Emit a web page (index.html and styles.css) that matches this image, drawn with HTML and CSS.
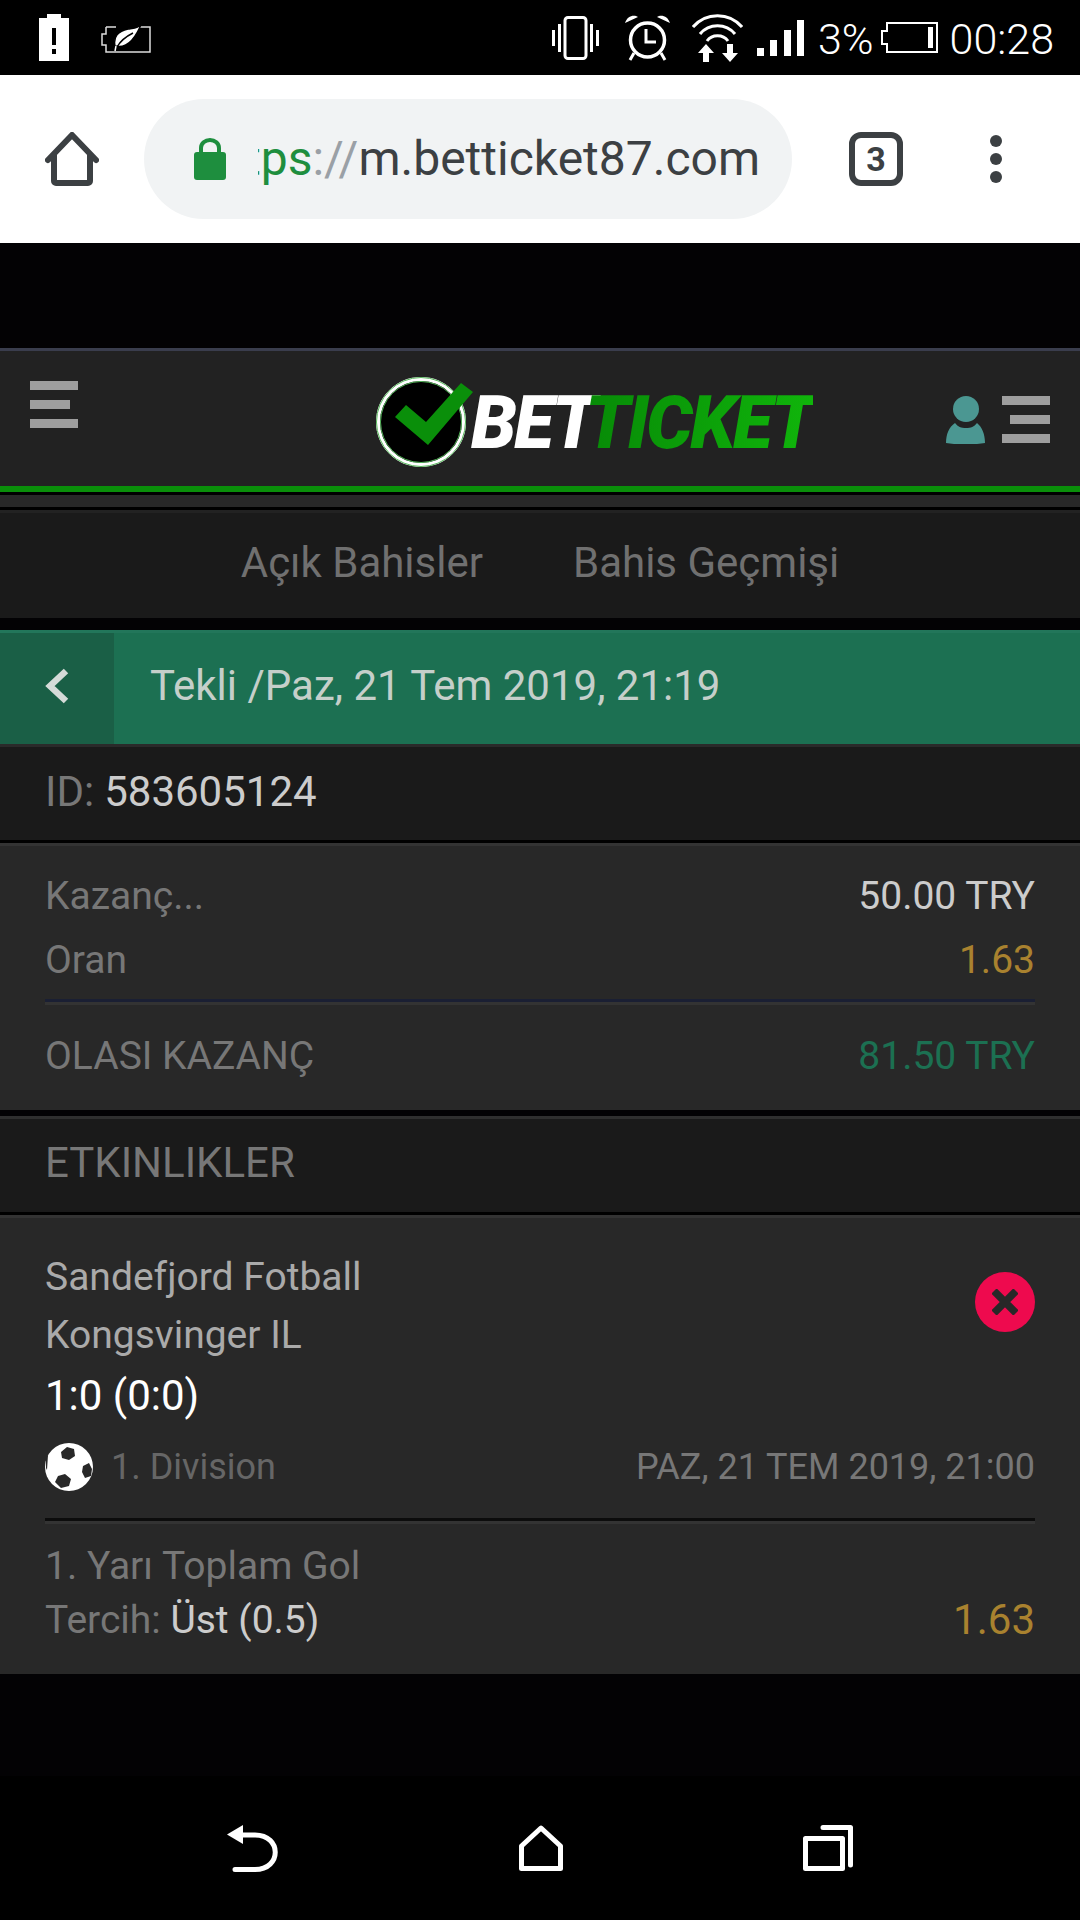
FILE: index.html
```html
<!DOCTYPE html>
<html lang="en">
<head>
    <meta charset="UTF-8">
    <title>BetTicket</title>
    <link rel="stylesheet" href="styles.css">
</head>
<body>
    <!-- Status bar -->
    <div class="status">
        <div class="status-left">
            <svg class="ic-alert" viewBox="0 0 30 47"><path fill="#fff" fill-rule="evenodd" d="M8 0h14v4h8v43H0V4h8zM13 14v17h4V14zM13 35v5h4v-5z"/></svg>
            <svg class="ic-leaf" viewBox="0 0 50 32"><path fill="none" stroke="#ddd" stroke-width="1.5" d="M5 5h10M38 5h11v25H5v-7H1V12h4V5"/><path fill="#fff" stroke="#000" stroke-width="1.5" d="M41 0C39 6 33 6 27 7 17 9 12 15 14 24 26 27 35 16 41 0z"/><path fill="none" stroke="#000" stroke-width="1.5" d="M16 25C20 18 26 14 32 11"/><path fill="none" stroke="#fff" stroke-width="1.5" d="M15 24l-1 5"/></svg>
        </div>
        <div class="status-right">
            <svg class="ic-vibrate" viewBox="0 0 47 44"><rect x="13" y="1.5" width="21" height="41" rx="3" fill="none" stroke="#fff" stroke-width="3"/><path stroke="#fff" stroke-width="3" d="M1.5 14v16M7.500 8v28M39.500 8v28M45.500 14v16"/></svg>
            <svg class="ic-alarm" viewBox="0 0 45 46"><circle cx="22.500" cy="25" r="17" fill="none" stroke="#fff" stroke-width="3.500"/><path fill="#fff" d="M0 8C2 1 9-1 13 2zM45 8C43 1 36-1 32 2z"/><path fill="none" stroke="#fff" stroke-width="3" d="M21 14v13h10M9 38l-4 7M36 38l4 7"/></svg>
            <svg class="ic-wifi" viewBox="0 0 51 49"><g fill="none" stroke="#fff" stroke-width="3"><path d="M1 14C14 -1 37 -1 50 14"/><path d="M8 21C17 10 34 10 43 21"/><path d="M15 28C20 21 31 21 36 28"/></g><path fill="#fff" d="M14 31l8 9h-5v9h-6v-9H6zM38 49l-8-9h5v-9h6v9h5z"/></svg>
            <svg class="ic-signal" viewBox="0 0 47 36"><path fill="#fff" d="M0 28h7v8H0zM13 20h7v16h-7zM27 10h7v26h-7zM40 0h7v36h-7z"/></svg>
            <span class="status-text pct">3%</span>
            <svg class="ic-battery" viewBox="0 0 57 31"><path fill="none" stroke="#fff" stroke-width="2" d="M6 1h50v29H6v-8H1V9h5z"/><path fill="#fff" d="M47 5h5v21h-5z"/></svg>
            <span class="status-text time">00:28</span>
        </div>
    </div>

    <!-- Browser toolbar -->
    <div class="toolbar">
        <svg class="ic-home" viewBox="0 0 54 54"><path fill="none" stroke="#3c4043" stroke-width="6" stroke-linecap="round" stroke-linejoin="round" d="M3 28L27 3l24 25M9 23v26a2 2 0 0 0 2 2h32a2 2 0 0 0 2-2V23"/></svg>
        <div class="pill">
            <svg class="ic-lock" viewBox="0 0 32 42"><path fill="#1e8e3e" d="M3 14h26a3 3 0 0 1 3 3v22a3 3 0 0 1-3 3H3a3 3 0 0 1-3-3V17a3 3 0 0 1 3-3z"/><path fill="none" stroke="#1e8e3e" stroke-width="4" d="M7 16v-6a9 8 0 0 1 18 0v6"/></svg>
            <div class="url"><span><span class="url-green">https</span><span class="url-gray">://</span>m.betticket87.com</span></div>
        </div>
        <div class="tabs-count">3</div>
        <div class="dots"><i></i><i></i><i></i></div>
    </div>

    <div class="top-gap"></div>

    <!-- Site header -->
    <div class="header">
        <div class="burger burger-left"><i></i><i></i><i></i></div>
        <div class="logo">
            <svg class="logo-mark" viewBox="0 0 98 90"><circle cx="45" cy="45" r="43" fill="#000" stroke="#fff" stroke-width="4"/><circle cx="45" cy="45" r="44.500" fill="none" stroke="#55b85a" stroke-width="1"/><circle cx="45" cy="45" r="40.500" fill="none" stroke="#55b85a" stroke-width="1"/><path fill="#0a8f0a" d="M19 40L30 28 50 45 85 6 97 15 52 68z"/></svg>
            <span class="logo-text"><span class="logo-bet">BET</span><span class="logo-ticket">TICKET</span></span>
        </div>
        <div class="header-right">
            <svg class="ic-user" viewBox="0 0 39 48"><ellipse cx="20" cy="13" rx="13" ry="13" fill="#4b9792"/><path fill="#4b9792" d="M9 27c3 4 6 5 11 5s8-1 11-5c5 4 8 11 8 20-12 2-27 2-39 0 0-9 3-16 9-20z"/></svg>
            <div class="burger burger-right"><i></i><i></i><i></i></div>
        </div>
    </div>
    <div class="sep"></div>

    <!-- Tabs -->
    <div class="tabs">
        <a>Açık Bahisler</a>
        <a>Bahis Geçmişi</a>
    </div>

    <!-- Title -->
    <div class="title-bar">
        <div class="back">
            <svg class="ic-chevron" viewBox="0 0 24 36"><path fill="none" stroke="#d5dbd8" stroke-width="6.500" d="M21 3L5 18l16 15"/></svg>
        </div>
        <div class="title-text">Tekli /Paz, 21 Tem 2019, 21:19</div>
    </div>

    <div class="id-row"><span class="muted">ID:</span> <span class="light">583605124</span></div>

    <!-- Summary -->
    <div class="summary">
        <div class="sum-row"><span class="muted">Kazanç...</span><span class="light">50.00 TRY</span></div>
        <div class="sum-row"><span class="muted">Oran</span><span class="gold">1.63</span></div>
        <div class="divider-blue"></div>
        <div class="sum-row sum-total"><span class="muted">OLASI KAZANÇ</span><span class="green">81.50 TRY</span></div>
    </div>

    <div class="events-head">ETKINLIKLER</div>

    <!-- Event -->
    <div class="event">
        <div class="event-top">
            <div>
                <div class="team">Sandefjord Fotball</div>
                <div class="team">Kongsvinger IL</div>
                <div class="score">1:0 (0:0)</div>
            </div>
            <div class="close">
                <svg class="ic-x" viewBox="0 0 26 26"><path stroke="#282828" stroke-width="7.500" d="M2 2l22 22M24 2L2 24"/></svg>
            </div>
        </div>
        <div class="event-meta">
            <div class="league">
                <svg class="ic-ball" viewBox="0 0 48 48"><circle cx="24" cy="24" r="24" fill="#fff"/><path fill="#282828" d="M16 9l6-5 7 2 1 7-6 4-7-2zM38 23l6-3 3 6-1 7-6 2-3-6zM13 33l7-2 6 5-2 7-8 2-6-6zM1 14l2-2-1 15-1-2z"/></svg>
                <span>1. Division</span>
            </div>
            <span class="match-date">PAZ, 21 TEM 2019, 21:00</span>
        </div>
        <div class="divider-dark"></div>
        <div class="market">1. Yarı Toplam Gol</div>
        <div class="pick"><span><span class="muted">Tercih:</span> <span class="light">Üst (0.5)</span></span><span class="gold pick-odd">1.63</span></div>
    </div>

    <!-- Android nav bar -->
    <div class="navbar">
        <svg class="ic-nav-back" viewBox="0 0 51 47"><path fill="none" stroke="#fff" stroke-width="5" stroke-linecap="round" d="M14 10h14c27 0 27 34.500 0 34.500H8"/><path fill="#fff" d="M0 9.500L16 0v19z"/></svg>
        <svg class="ic-nav-home" viewBox="0 0 44 46"><path fill="none" stroke="#fff" stroke-width="5" stroke-linejoin="round" d="M22 3L2.500 21v22.500h39V21z"/></svg>
        <svg class="ic-nav-recent" viewBox="0 0 50 46"><rect x="2.500" y="13.500" width="37" height="30" fill="none" stroke="#fff" stroke-width="5" stroke-linejoin="round"/><path fill="none" stroke="#fff" stroke-width="5" stroke-linecap="round" stroke-linejoin="round" d="M20 2.500h27.500V40"/></svg>
    </div>
</body>
</html>
```

FILE: styles.css
```css
/* General Reset */
* {
    margin: 0;
    padding: 0;
    box-sizing: border-box;
    font-family: Roboto, "Liberation Sans", sans-serif;
}

body {
    width: 1080px;
    height: 1920px;
    background-color: #030204;
    display: flex;
    flex-direction: column;
    font-size: 39px;
    overflow: hidden;
}

svg {
    display: block;
    flex-shrink: 0;
}

/* Status bar */
.status {
    height: 75px;
    background-color: #000;
    display: flex;
    justify-content: space-between;
    align-items: center;
    padding: 0 26px 0 39px;
}

.status-left,
.status-right {
    display: flex;
    align-items: center;
}

.status-left { gap: 32px; }
.status-right { gap: 14px; }

.status-text {
    color: #fff;
    font-size: 43px;
    line-height: 1;
    font-weight: 300;
    padding-top: 4px;
}

.ic-alert { width: 30px; height: 47px; }
.ic-leaf { width: 50px; height: 32px; }
.ic-vibrate { width: 47px; height: 44px; margin-right: 12px; }
.ic-alarm { width: 45px; height: 46px; margin-right: 8px; }
.ic-wifi { width: 51px; height: 49px; }
.ic-signal { width: 47px; height: 36px; }
.ic-battery { width: 57px; height: 31px; margin-right: -2px; }
.pct { margin-right: -7px; }

/* Browser toolbar */
.toolbar {
    height: 168px;
    background-color: #fff;
    display: flex;
    align-items: center;
    padding-left: 45px;
}

.ic-home { width: 54px; height: 54px; }

.pill {
    width: 648px;
    height: 120px;
    margin-left: 45px;
    border-radius: 60px;
    background-color: #f1f3f4;
    display: flex;
    align-items: center;
    padding-left: 50px;
}

.ic-lock { width: 32px; height: 42px; margin-right: 32px; }

.url {
    width: 502px;
    display: flex;
    justify-content: flex-end;
    overflow: hidden;
    white-space: nowrap;
    font-size: 48px;
    line-height: 60px;
    color: #3c4043;
}

.url-green { color: #1e8e3e; }
.url-gray { color: #9aa0a6; }

.tabs-count {
    width: 54px;
    height: 54px;
    margin-left: 57px;
    border: 6px solid #3c4043;
    border-radius: 12px;
    color: #3c4043;
    font-size: 34px;
    font-weight: 700;
    display: flex;
    align-items: center;
    justify-content: center;
}

.dots {
    margin-left: 87px;
    display: flex;
    flex-direction: column;
    gap: 6px;
}

.dots i {
    width: 12px;
    height: 12px;
    border-radius: 50%;
    background-color: #3c4043;
}

.top-gap { height: 105px; }

/* Site header */
.header {
    height: 144px;
    background-color: #222;
    border-top: 3px solid #3a3d4d;
    border-bottom: 6px solid #0a8f0a;
    display: flex;
    align-items: flex-start;
    padding: 0 30px;
}

.burger {
    display: flex;
    flex-direction: column;
    gap: 10px;
}

.burger i {
    height: 9px;
    background-color: #9e9e9e;
}

.burger-left {
    width: 48px;
    margin-top: 30px;
}

.burger-left i:nth-child(2) { width: 40px; }

.burger-right {
    width: 48px;
    align-items: flex-end;
}

.burger-right i { width: 100%; }
.burger-right i:nth-child(2) { width: 40px; }

.logo {
    display: flex;
    align-items: center;
    margin-top: 24px;
    margin-left: 298px;
}

.logo-mark {
    width: 98px;
    height: 90px;
}

.logo-text {
    font-size: 73px;
    line-height: 90px;
    font-weight: 900;
    font-style: italic;
    margin-left: -3px;
    padding-top: 3px;
    letter-spacing: -2.5px;
}

.logo-bet { color: #fff; }

.logo-ticket {
    margin-left: -9px;
    background: linear-gradient(90deg, #078a07, #10b50b);
    -webkit-background-clip: text;
    background-clip: text;
    color: transparent;
}

.header-right {
    display: flex;
    gap: 17px;
    margin-top: 45px;
    margin-left: auto;
}

.ic-user { width: 39px; height: 48px; }

.sep {
    height: 18px;
    background-color: #282828;
    border-top: 3px solid #000;
    border-bottom: 3px solid #000;
}

/* Tabs */
.tabs {
    height: 108px;
    background-color: #1a1a1a;
    border-top: 3px solid #222;
    display: flex;
    justify-content: center;
    align-items: center;
    gap: 90px;
    padding-bottom: 6px;
    font-size: 42px;
    color: #707070;
    margin-bottom: 12px;
}

/* Title */
.title-bar {
    height: 114px;
    background-color: #1c7052;
    border-top: 3px solid #22765a;
    display: flex;
    align-items: center;
}

.back {
    width: 114px;
    height: 100%;
    padding-bottom: 6px;
    background-color: #1a5f46;
    display: flex;
    align-items: center;
    justify-content: center;
}

.ic-chevron { width: 24px; height: 36px; }

.title-text {
    margin-left: 36px;
    padding-bottom: 6px;
    font-size: 42px;
    color: #c5cfca;
}

.id-row {
    height: 99px;
    background-color: #1a1a1a;
    border-top: 3px solid #2a2a2a;
    border-bottom: 3px solid #000;
    padding: 0 0 4px 45px;
    display: flex;
    align-items: center;
    gap: 10px;
    font-size: 42px;
}

.muted { color: #777; }
.light { color: #ccc; }
.gold { color: #a9822f; }
.green { color: #1c7052; }

/* Summary */
.summary {
    height: 267px;
    background-color: #282828;
    border-top: 3px solid #333;
    padding: 18px 45px 0;
}

.sum-row {
    height: 63px;
    display: flex;
    justify-content: space-between;
    align-items: center;
}

.sum-row + .sum-row { padding-top: 2px; }

.divider-blue {
    height: 6px;
    margin-top: 9px;
    background-color: #333;
    border-top: 3px solid #1a1f33;
}

.sum-total {
    height: 84px;
    margin-top: 8px;
    padding-top: 2px;
}

.events-head {
    height: 99px;
    margin-top: 6px;
    background-color: #1a1a1a;
    border-top: 3px solid #2f2f2f;
    border-bottom: 3px solid #000;
    padding: 0 0 6px 45px;
    display: flex;
    align-items: center;
    font-size: 42px;
    color: #777;
}

/* Event */
.event {
    height: 459px;
    background-color: #282828;
    border-top: 3px solid #333;
    padding: 30px 45px 0;
}

.event-top {
    display: flex;
    justify-content: space-between;
    align-items: flex-start;
}

.team {
    line-height: 58px;
    color: #aaa;
}

.score {
    font-size: 42px;
    line-height: 62px;
    padding-top: 1px;
    color: #fff;
}

.close {
    width: 60px;
    height: 60px;
    margin-top: 24px;
    border-radius: 50%;
    background-color: #ee0a4e;
    display: flex;
    align-items: center;
    justify-content: center;
}

.ic-x { width: 26px; height: 26px; }

.event-meta {
    height: 48px;
    margin-top: 16px;
    display: flex;
    justify-content: space-between;
    align-items: center;
    font-size: 36px;
    color: #666;
}

.league {
    display: flex;
    align-items: center;
    gap: 18px;
}

.ic-ball { width: 48px; height: 48px; }
.match-date { color: #777; }

.divider-dark {
    height: 6px;
    margin-top: 27px;
    background-color: #333;
    border-top: 3px solid #0c0c0c;
}

.market {
    margin-top: 15px;
    line-height: 54px;
    color: #777;
}

.pick {
    display: flex;
    justify-content: space-between;
    align-items: center;
    line-height: 54px;
}

.pick-odd { font-size: 42px; }

/* Android nav bar */
.navbar {
    height: 144px;
    margin-top: auto;
    background-color: #000;
    display: flex;
    align-items: center;
    padding: 0 227px;
    justify-content: space-between;
}

.ic-nav-back { width: 51px; height: 47px; }
.ic-nav-home { width: 44px; height: 46px; }
.ic-nav-recent { width: 50px; height: 46px; }
```
